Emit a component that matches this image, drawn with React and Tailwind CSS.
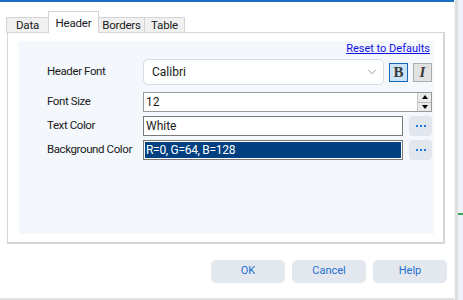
import { ChevronDown } from 'lucide-react';

function Tab({ label, active, w }) {
  if (active) {
    return (
      <div
        className={`h-[22px] ${w} bg-white border border-b-0 border-[#d4d4d4] flex items-start justify-center pt-[3px] relative z-10`}
      >
        {label}
      </div>
    );
  }
  return (
    <div
      className={`h-[16px] ${w} bg-[#f0f0f0] border border-b-0 border-[#d4d4d4] -ml-px flex items-center justify-center leading-none pt-[1px]`}
    >
      {label}
    </div>
  );
}

function DotsButton() {
  return (
    <div className="w-[23px] h-[20px] ml-[6px] rounded-[4px] bg-[#e2e7ef] flex items-center justify-center gap-[2px]">
      <span className="w-[2px] h-[2px] bg-[#1c78e0]" />
      <span className="w-[2px] h-[2px] bg-[#1c78e0]" />
      <span className="w-[2px] h-[2px] bg-[#1c78e0]" />
    </div>
  );
}

function Label({ children }) {
  return <div className="w-[96px] shrink-0 text-[#1a1a1a] text-[11.5px] tracking-[-0.4px]">{children}</div>;
}

function DialogButton({ children }) {
  return (
    <div className="w-[74px] h-[23px] rounded-[5px] bg-[#e3e8ef] text-[#1f6fd0] flex items-center justify-center">
      {children}
    </div>
  );
}

export default function App() {
  return (
    <div
      className="w-[463px] h-[300px] flex bg-white text-[11px] text-[#1a1a1a] overflow-hidden"
      style={{ fontFamily: 'Roboto, "Noto Sans", sans-serif' }}
    >
      <div className="w-[454px] h-[300px] flex flex-col border-t-2 border-[#1a6fc4] border-b-2 border-b-[#e2e2e2]">
        {/* tabs */}
        <div className="flex items-end pt-[9px] pl-[7px] -mb-px text-[11.5px] tracking-[-0.2px]">
          <div className="-mr-px flex items-end">
            <Tab label="Data" w="w-[43px]" />
          </div>
          <Tab label="Header" active w="w-[51px]" />
          <Tab label="Borders" w="w-[47px]" />
          <Tab label="Table" w="w-[41px]" />
        </div>

        {/* tab page */}
        <div className="ml-[7px] w-[438px] h-[212px] border border-r-2 border-b-2 border-[#d6d6d6] pt-[8px] pl-[11px] pr-[9px] pb-[8px]">
          <div className="h-full bg-[#f4f7fc] flex flex-col pl-[28px] pr-[1px]">
            <div className="h-[15px] flex justify-end pr-[3px] pt-[1px]">
              <span className="text-[#1010e8] underline leading-[13px]">Reset to Defaults</span>
            </div>

            <div className="mt-[3px] flex items-center h-[26px]">
              <Label>Header Font</Label>
              <div className="w-[241px] h-[26px] rounded-[5px] border border-[#d8dde5] bg-white flex items-center pl-[8px] pr-[4px] text-[12px]">
                <span className="flex-1">Calibri</span>
                <ChevronDown size={14} strokeWidth={1.4} className="text-[#8a8a8a]" />
              </div>
              <div
                className="ml-[5px] w-[19px] h-[19px] bg-[#cce4f7] border border-[#1667b5] flex items-center justify-center font-bold text-[15px] text-[#3a3a3a]"
                style={{ fontFamily: '"Liberation Serif", serif' }}
              >
                B
              </div>
              <div
                className="ml-[5px] w-[19px] h-[19px] bg-[#e1e1e1] border border-[#adadad] flex items-center justify-center font-bold italic text-[15px] text-[#3a3a3a]"
                style={{ fontFamily: '"Liberation Serif", serif' }}
              >
                I
              </div>
            </div>

            <div className="mt-[7px] flex items-center h-[20px]">
              <Label>Font Size</Label>
              <div className="w-[289px] h-[20px] border border-[#9a9a9a] bg-white flex items-center pl-[2px] text-[12px]">
                <span className="flex-1 leading-none">12</span>
                <div className="w-[14px] h-[18px] flex flex-col border-l border-[#c8c8c8] bg-[#eaeaea]">
                  <div className="flex-1 flex items-center justify-center border-b border-[#b8b8b8]">
                    <span className="w-0 h-0 border-l-[3px] border-r-[3px] border-b-[4px] border-l-transparent border-r-transparent border-b-black" />
                  </div>
                  <div className="flex-1 flex items-center justify-center">
                    <span className="w-0 h-0 border-l-[3px] border-r-[3px] border-t-[4px] border-l-transparent border-r-transparent border-t-black" />
                  </div>
                </div>
              </div>
            </div>

            <div className="mt-[4px] flex items-center h-[20px]">
              <Label>Text Color</Label>
              <div className="w-[260px] h-[20px] border border-[#7a7a7a] bg-white flex items-center pl-[2px] text-[12px] leading-none">
                White
              </div>
              <DotsButton />
            </div>

            <div className="mt-[4px] flex items-center h-[20px]">
              <Label>Background Color</Label>
              <div className="w-[260px] h-[20px] border border-[#7a7a7a] bg-[#004080] flex">
                <div className="flex-1 border border-white text-white flex items-center pl-[1px] text-[12px] leading-none tracking-[-0.3px]">
                  R=0, G=64, B=128
                </div>
              </div>
              <DotsButton />
            </div>
          </div>
        </div>

        {/* dialog buttons */}
        <div className="mt-[16px] flex justify-end gap-[7px] pr-[7px]">
          <DialogButton>OK</DialogButton>
          <DialogButton>Cancel</DialogButton>
          <DialogButton>Help</DialogButton>
        </div>
      </div>

      {/* right edge strip */}
      <div className="w-[9px] h-[300px] relative flex">
        <div className="w-[1px] bg-[#f4f4f4]" />
        <div className="w-[3px] bg-[#dedede]" />
        <div className="flex-1 bg-[#eef2f8]" />
        <div className="absolute left-[4px] top-[213px] w-[5px] h-[2px] bg-[#3aa35a]" />
      </div>
    </div>
  );
}
